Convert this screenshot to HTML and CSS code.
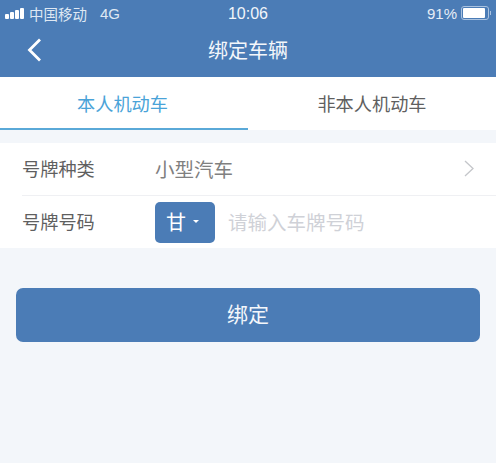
FILE: index.html
```html
<!DOCTYPE html>
<html lang="zh-CN">
<head>
<meta charset="utf-8">
<title>绑定车辆</title>
<link rel="stylesheet" href="styles.css">
</head>
<body>
<div class="page">
  <header class="header">
    <div class="status">
      <div class="status-left">
        <span class="signal"><i class="b1"></i><i class="b2"></i><i class="b3"></i><i class="b4"></i></span>
        <span class="carrier">中国移动</span>
        <span class="net">4G</span>
      </div>
      <div class="time">10:06</div>
      <div class="status-right">
        <span class="pct">91%</span>
        <span class="battery"><span class="level"></span></span>
        <span class="nub"></span>
      </div>
    </div>
    <div class="nav">
      <svg class="back" width="16" height="26" viewBox="0 0 16 26"><path d="M14 2.5 L3.5 13 L14 23.5" fill="none" stroke="#fff" stroke-width="2.8"/></svg>
      <div class="nav-title">绑定车辆</div>
    </div>
  </header>
  <div class="tabs">
    <div class="tab active">本人机动车</div>
    <div class="tab">非本人机动车</div>
  </div>
  <section class="form">
    <div class="row row-first">
      <div class="label">号牌种类</div>
      <div class="value">小型汽车</div>
      <svg class="chev" width="10" height="17" viewBox="0 0 10 17"><path d="M1 1 L9 8.5 L1 16" fill="none" stroke="#c4c6ca" stroke-width="1.3"/></svg>
    </div>
    <div class="row row-second">
      <div class="label">号牌号码</div>
      <div class="province"><span>甘</span><i class="caret"></i></div>
      <div class="placeholder">请输入车牌号码</div>
    </div>
  </section>
  <div class="submit">绑定</div>
</div>
</body>
</html>
```
FILE: styles.css
```css
* { box-sizing: border-box; }
html, body { margin: 0; padding: 0; }
body { font-family: "Liberation Sans", "Noto Sans CJK SC", sans-serif; background: #f3f6fa; }
.page { width: 496px; height: 463px; overflow: hidden; background: #f3f6fa; }
.header { height: 77px; background: #4b7cb6; color: #fff; }
.status { height: 26px; display: flex; align-items: center; justify-content: space-between; padding: 0 5px; position: relative; font-size: 15px; color: #e6edf6; }
.status-left { display: flex; align-items: center; }
.signal { display: flex; align-items: flex-end; gap: 1px; width: 19px; height: 11px; }
.signal i { display: block; width: 4px; background: #fff; border-radius: 1px; }
.b1 { height: 5px; } .b2 { height: 7px; } .b3 { height: 9px; } .b4 { height: 11px; }
.carrier { margin-left: 5px; font-size: 14.5px; color: #dfe8f3; }
.net { margin-left: 13px; font-size: 15px; color: #dfe8f3; }
.time { position: absolute; left: 0; right: 0; top: 5px; text-align: center; font-size: 16px; line-height: 18px; color: #f2f5fa; }
.status-right { display: flex; align-items: center; position: relative; }
.pct { font-size: 15px; margin-right: 4px; }
.battery { display: block; width: 28px; height: 14px; border: 1px solid #a9c2e0; border-radius: 3px; padding: 1px; }
.level { display: block; width: 90%; height: 100%; background: #fff; border-radius: 1px; }
.nub { display: block; width: 1px; height: 4px; margin-left: 1px; background: #a9c2e0; }
.nav { height: 51px; display: flex; align-items: center; justify-content: center; position: relative; }
.back { position: absolute; left: 26px; top: 11px; }
.nav-title { font-size: 20px; color: #f4f7fb; margin-top: -4px; }
.tabs { height: 53px; display: flex; background: #fff; }
.tab { flex: 0 0 50%; display: flex; align-items: center; justify-content: center; font-size: 18.2px; color: #5f5f5f; padding-bottom: 1px; }
.tab.active { color: #4aa3d8; border-bottom: 2px solid #5aa9d8; padding: 0 3px 0 0; }
.form { margin-top: 13px; background: #fff; padding-left: 22px; }
.row { display: flex; align-items: center; position: relative; }
.row-first { height: 53px; border-bottom: 1px solid #eff0f3; padding-bottom: 2px; }
.row-second { height: 52px; }
.label { width: 133px; font-size: 18.2px; color: #5f5f5f; }
.row-second .label, .placeholder { padding-bottom: 2px; }
.value { flex: 1; font-size: 19.5px; color: #808080; }
.chev { margin-right: 22px; }
.province { width: 60px; height: 41px; display: flex; align-items: center; padding: 0 0 2px 11px; background: #4b7cb6; border-radius: 5px; color: #fff; font-size: 20px; }
.caret { display: block; margin-left: 7px; border: 3.5px solid transparent; border-top: 3.5px solid #fff; border-bottom: 0; }
.placeholder { margin-left: 13px; font-size: 19.5px; color: #cfd1d7; }
.submit { margin: 40px 16px 0; height: 54px; display: flex; align-items: center; justify-content: center; background: #4b7cb6; border-radius: 7px; color: #f4f7fb; font-size: 21px; padding-bottom: 4px; }
```
